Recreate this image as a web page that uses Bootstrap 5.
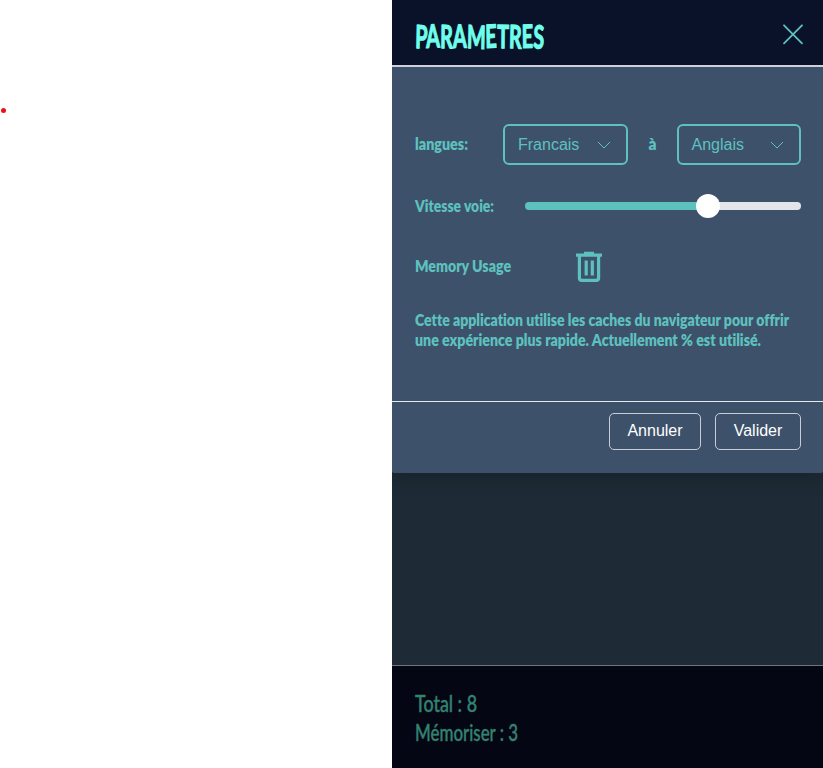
<!DOCTYPE html>
<html lang="fr">
<head>
<meta charset="utf-8">
<meta name="viewport" content="width=device-width, initial-scale=1">
<title>Paramètres</title>
<link href="https://cdn.jsdelivr.net/npm/bootstrap@5.3.0/dist/css/bootstrap.min.css" rel="stylesheet">
<style>
body{font-family:"Liberation Sans",Arial,sans-serif;background:#fff}
.app-panel{width:431px;background:#1e2a35;overflow:hidden}
.recorder{width:392px;padding:108px 0 0 1px}
.rec-dot{width:5px;height:5px;background:#ec1118}
.settings{height:472.5px;background:#3d516b;box-shadow:0 8px 16px rgba(0,0,0,.15);border-radius:0 0 2px 2px}
.settings-head{height:67px;background:#0a1229;border-bottom:2px solid #ced1d8;padding:2px 19px 0 23px}
.settings-body{height:334px;padding:57px 22px 0 23px}
.settings-foot{height:72px;border-top:1px solid #e5e8ec;padding:11px 22px 0}
.lettering{display:block;overflow:visible}
.lettering text{font-family:Lato,sans-serif;font-weight:800;font-size:16.5px;fill:#5dc1be;font-variant-ligatures:none}
.lettering .title-text{font-size:32px;font-weight:700;fill:#70ffec;stroke:#70ffec;stroke-width:1.2;stroke-linejoin:round}
.stats .lettering text{font-size:23px;font-weight:500;fill:#348272;stroke:#348272;stroke-width:.4;stroke-linejoin:round}
.lang-select{width:124.5px;height:40.5px;border:2px solid #5dc1be;border-radius:6px;color:#5dc1be;padding:0 15px 0 13px;font-size:16px;background:none}
.lang-select:hover{color:#5dc1be;border-color:#5dc1be}
.lang-pair{gap:20px}
.row-lang{height:41px}
.row-speed{height:24px;margin-top:29px}
.row-memory{height:32px;margin-top:33px}
.speed{width:276px;height:24px;appearance:none;-webkit-appearance:none;background:none;margin:0}
.speed::-webkit-slider-runnable-track{height:8px;border-radius:4px;background:linear-gradient(90deg,#5dc1be 0 66.5%,#e2e6ec 66.5%)}
.speed::-webkit-slider-thumb{-webkit-appearance:none;width:24px;height:24px;border-radius:50%;background:#fff;margin-top:-8px}
.action{height:37px;border:1px solid #c7cdd5;border-radius:5px;color:#fff;padding:0 0 2px;font-size:16px;line-height:32px}
.action-cancel{width:92px}
.action-ok{width:86px;margin-left:14px}
.stats{height:103px;background:#040713;border-top:1px solid #6f757b;padding:24px 23px 0}
</style>
</head>
<body>
<div class="d-flex vh-100 overflow-hidden">
  <main class="recorder flex-shrink-0"><div class="rec-dot rounded-circle"></div></main>
  <aside class="app-panel d-flex flex-column flex-shrink-0">
    <section class="settings flex-shrink-0">
      <header class="settings-head d-flex justify-content-between align-items-center">
        <svg class="lettering" width="132" height="34" role="heading"><text class="title-text" x="0" y="31" rotate="2 -2 1 -1 2 -2 1 2 -1 3" textLength="129" lengthAdjust="spacingAndGlyphs">PARAMETRES</text></svg>
        <button class="btn p-0 border-0 lh-1" aria-label="Fermer"><svg class="d-block" width="22" height="22" fill="none" stroke="#5dc1be" stroke-width="1.8" stroke-linecap="round"><path d="M2 2.3 20 20.3M20 2.3 2 20.3"/></svg></button>
      </header>
      <div class="settings-body">
        <div class="row-lang d-flex justify-content-between align-items-center">
          <svg class="lettering" width="54" height="24"><text x="0" y="17" textLength="53" lengthAdjust="spacingAndGlyphs">langues:</text></svg>
          <div class="lang-pair d-flex align-items-center">
            <button class="lang-select btn d-flex align-items-center justify-content-between">Francais <svg width="14" height="8" fill="none" stroke="#5dc1be" stroke-width="1"><path d="m1 1 6 6 6-6"/></svg></button>
            <svg class="lettering" width="9" height="24"><text x="0.5" y="17" textLength="8" lengthAdjust="spacingAndGlyphs">à</text></svg>
            <button class="lang-select btn d-flex align-items-center justify-content-between">Anglais <svg width="14" height="8" fill="none" stroke="#5dc1be" stroke-width="1"><path d="m1 1 6 6 6-6"/></svg></button>
          </div>
        </div>
        <div class="row-speed d-flex justify-content-between align-items-center">
          <svg class="lettering" width="80" height="24"><text x="0" y="18" textLength="79" lengthAdjust="spacingAndGlyphs">Vitesse voie:</text></svg>
          <input class="speed" type="range" min="0" max="1000" value="679" aria-label="Vitesse voie">
        </div>
        <div class="row-memory d-flex align-items-center">
          <svg class="lettering" width="160" height="24"><text x="0" y="17" textLength="96" lengthAdjust="spacingAndGlyphs">Memory Usage</text></svg>
          <button class="btn p-0 border-0 lh-1" aria-label="Vider le cache"><svg class="d-block" width="28" height="32" fill="none" stroke="#5dc1be" stroke-width="3.2"><path d="M1 4.2h26M9 2.3h10M4.4 5v22q0 2.4 2.4 2.4h14.4q2.4 0 2.4-2.4V5M11.2 9.5v15M17.3 9.5v15"/></svg></button>
        </div>
        <svg class="lettering mt-4" width="386" height="50"><text x="0" y="19" textLength="374" lengthAdjust="spacingAndGlyphs">Cette application utilise les caches du navigateur pour offrir</text><text x="0" y="39" textLength="346" lengthAdjust="spacingAndGlyphs">une expérience plus rapide. Actuellement % est utilisé.</text></svg>
      </div>
      <footer class="settings-foot d-flex justify-content-end align-items-start">
        <button class="action action-cancel btn">Annuler</button>
        <button class="action action-ok btn">Valider</button>
      </footer>
    </section>
    <footer class="stats mt-auto flex-shrink-0">
      <svg class="lettering" width="120" height="60"><text x="0" y="22" textLength="62" lengthAdjust="spacingAndGlyphs">Total : 8</text><text x="0" y="50.5" textLength="103" lengthAdjust="spacingAndGlyphs">Mémoriser : 3</text></svg>
    </footer>
  </aside>
</div>
<script src="https://cdn.jsdelivr.net/npm/bootstrap@5.3.0/dist/js/bootstrap.bundle.min.js"></script>
</body>
</html>
